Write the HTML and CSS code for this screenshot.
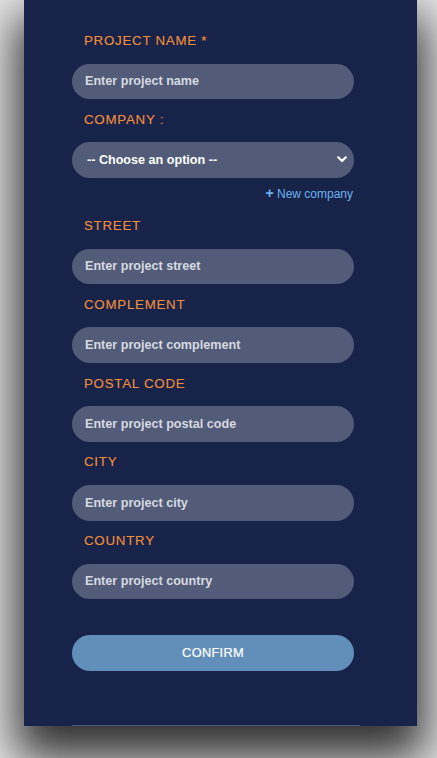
FILE: index.html
```html
<!DOCTYPE html>
<html lang="en">
<head>
<meta charset="utf-8">
<title>New project</title>
<link rel="stylesheet" href="styles.css">
</head>
<body>
<div class="panel">
  <form class="form">
    <div class="group">
      <label class="label" for="name">PROJECT NAME *</label>
      <input class="field" id="name" type="text" placeholder="Enter project name">
    </div>
    <div class="group company">
      <label class="label" for="company">COMPANY :</label>
      <div class="select-wrap">
        <select class="field select" id="company">
          <option>-- Choose an option --</option>
        </select>
        <svg class="chevron" width="10" height="7" viewBox="0 0 10 7"><path d="M1.2 1.3 L5 5 L8.8 1.3" fill="none" stroke="#ffffff" stroke-width="2.2" stroke-linecap="round" stroke-linejoin="round"/></svg>
      </div>
      <div class="new-row"><a class="new-link" href="#"><span class="plus">+</span> New company</a></div>
    </div>
    <div class="group">
      <label class="label" for="street">STREET</label>
      <input class="field" id="street" type="text" placeholder="Enter project street">
    </div>
    <div class="group">
      <label class="label" for="complement">COMPLEMENT</label>
      <input class="field" id="complement" type="text" placeholder="Enter project complement">
    </div>
    <div class="group">
      <label class="label" for="postal">POSTAL CODE</label>
      <input class="field" id="postal" type="text" placeholder="Enter project postal code">
    </div>
    <div class="group">
      <label class="label" for="city">CITY</label>
      <input class="field" id="city" type="text" placeholder="Enter project city">
    </div>
    <div class="group">
      <label class="label" for="country">COUNTRY</label>
      <input class="field" id="country" type="text" placeholder="Enter project country">
    </div>
    <button class="confirm" type="button">CONFIRM</button>
  </form>
  <div class="rule"></div>
</div>
</body>
</html>
```

FILE: styles.css
```css
html, body {
  margin: 0;
  padding: 0;
}
body {
  background: #e8e8e8;
  font-family: "Liberation Sans", Arial, sans-serif;
  height: 758px;
  overflow: hidden;
}
.panel {
  margin-left: 24px;
  width: 393px;
  height: 726px;
  background: #172349;
  box-shadow: 0 24px 44px 8px rgba(0, 0, 0, 0.8);
  display: flex;
  flex-direction: column;
  box-sizing: border-box;
  padding-top: 33px;
}
.form {
  margin-left: 48px;
  width: 282px;
  display: flex;
  flex-direction: column;
  flex: 1;
}
.group {
  display: flex;
  flex-direction: column;
  margin-bottom: 12.5px;
}
.label {
  display: block;
  height: 16px;
  line-height: 16px;
  font-size: 13.3px;
  letter-spacing: 0.75px;
  color: #f08f3b;
  -webkit-text-stroke: 0.12px #f08f3b;
  padding-left: 12px;
  margin-bottom: 14.5px;
}
.field {
  box-sizing: border-box;
  width: 282px;
  height: 35.75px;
  border: none;
  outline: none;
  border-radius: 18px;
  background: #525c78;
  padding: 0 12px 0 13px;
  font-family: "Liberation Sans", Arial, sans-serif;
  font-size: 12.6px;
  font-weight: bold;
  color: #ffffff;
}
.field::placeholder {
  color: #d6d9e0;
  opacity: 1;
}
.select-wrap {
  position: relative;
  width: 282px;
}
.select {
  appearance: none;
  -webkit-appearance: none;
  padding-left: 15px;
  color: #ffffff;
  display: block;
}
.chevron {
  position: absolute;
  right: 7px;
  top: 14px;
  pointer-events: none;
}
.company {
  margin-bottom: 18.5px;
}
.new-row {
  display: flex;
  justify-content: flex-end;
  height: 14px;
  line-height: 14px;
  margin-top: 7.5px;
}
.new-link {
  color: #6cb2f0;
  font-size: 12px;
  text-decoration: none;
  padding-right: 1px;
}
.plus {
  font-weight: bold;
  font-size: 14px;
}
.confirm {
  margin-top: 23px;
  width: 282px;
  height: 36px;
  border: none;
  border-radius: 18px;
  background: #628fb9;
  color: #ffffff;
  -webkit-text-stroke: 0.2px #ffffff;
  font-family: "Liberation Sans", Arial, sans-serif;
  font-size: 12.8px;
  letter-spacing: 0.3px;
  padding: 0;
}
.rule {
  margin-left: 48px;
  width: 288px;
  height: 1px;
  background: #4a5680;
}
```
